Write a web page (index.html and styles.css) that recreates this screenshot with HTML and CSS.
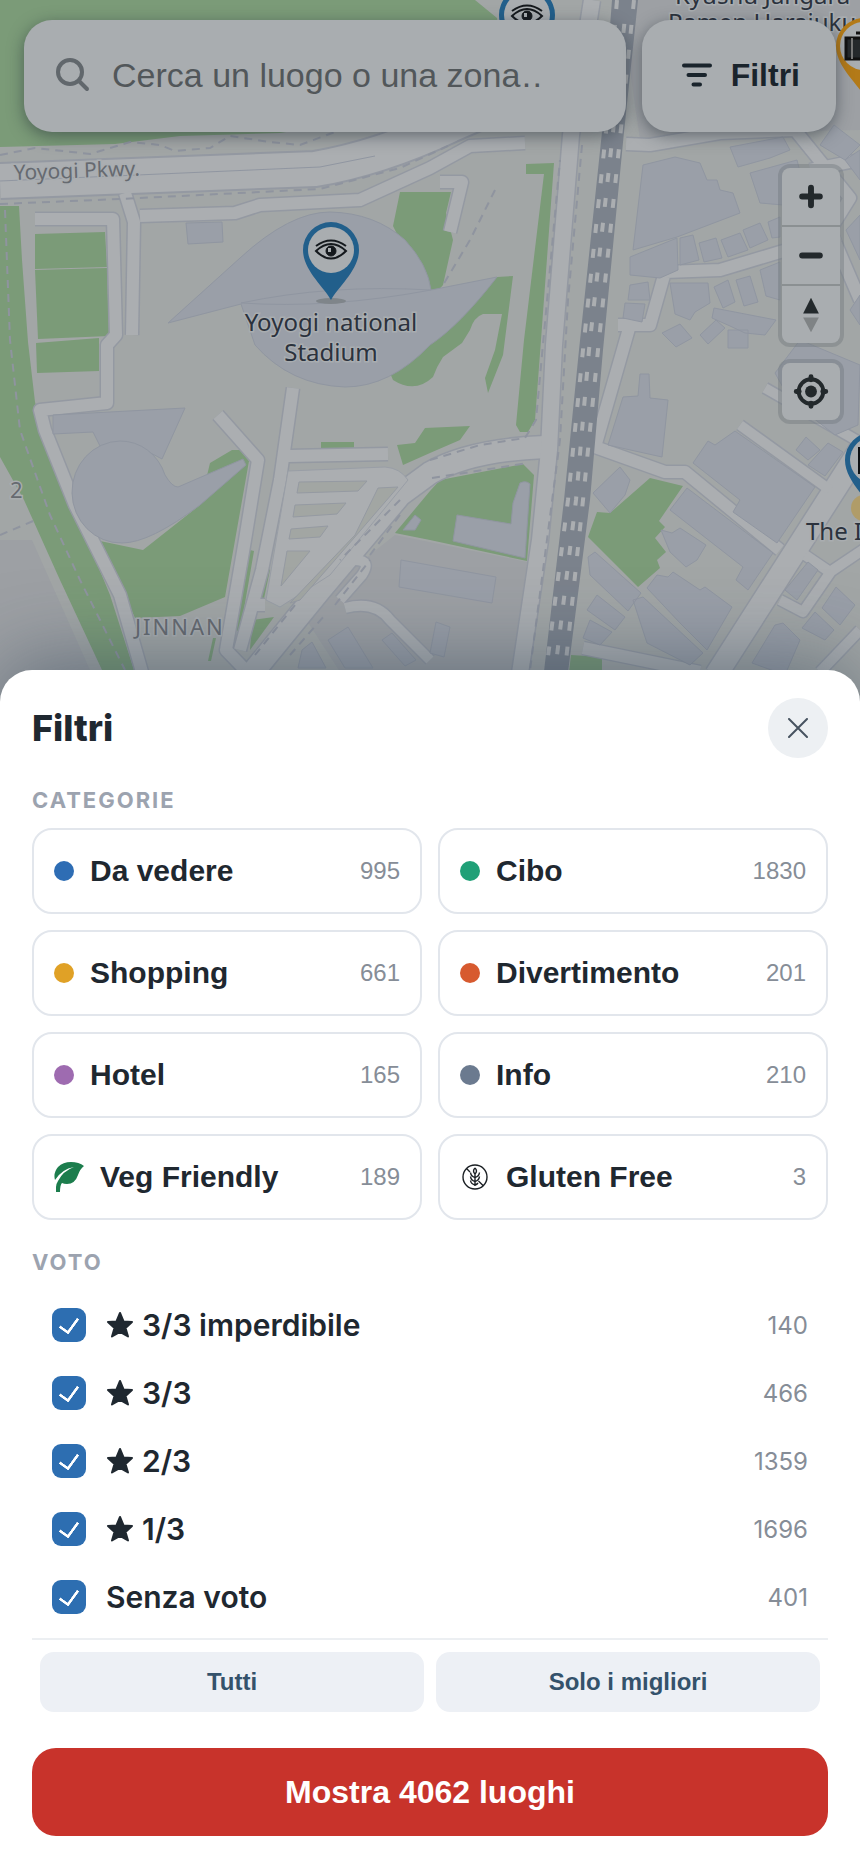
FILE: index.html
```html
<!DOCTYPE html>
<html lang="it">
<head>
<meta charset="utf-8">
<meta name="viewport" content="width=device-width, initial-scale=1">
<title>Filtri</title>
<link rel="stylesheet" href="styles.css">
</head>
<body>
<div class="app">
  <section class="stage">
    <svg class="map" viewBox="0 0 860 720" preserveAspectRatio="xMidYMin slice" role="img" aria-label="Mappa di Jinnan">
      <defs>
        <g id="eye" fill="none" stroke="#15191d">
          <path d="M-15 1Q0-13 15 1Q0 16-15 1Z" stroke-width="2"/>
          <path d="M-15-4Q0-15 15-4" stroke-width="2"/>
          <circle r="5" cy="1" fill="#15191d"/><rect x="-3" y="-2" width="3" height="4" fill="#a9adb0" stroke="none"/>
        </g>
        <path id="pin" d="M0 50C-7 37-28 20-28 0A28 28 0 0 1 28 0C28 20 7 37 0 50Z"/>
      </defs>
      <rect class="land" width="860" height="720"/>
      <path class="block" d="M0 540H32L90 670V720H0ZM620 0H860V130L720 133L640 140ZM395 535L527 562L512 672H340L300 610Z"/>
      <g class="green">
        <path d="M0 0H475L497 18L500 40L420 110L280 133L180 136L115 144L0 147Z"/>
        <path d="M0 206H19L22 260L28 342L35 402L45 440L75 510L110 595L134 670H102L60 580L24 500L0 457Z"/>
        <path d="M35 234L105 232L107 267L35 269ZM35 270L107 268L109 336L38 339ZM36 343L99 338V371L37 373Z"/>
        <path d="M400 192H451L446 213L453 240L443 285L430 300L393 226Z"/>
        <path d="M526 164L554 163L552 190L541 340L535 420L528 432H520L516 425L524 340L544 174H526Z"/>
        <path d="M497 277L513 276L503 355L488 393L485 378L495 350L502 314L483 314Q474 317 470 330L462 343L443 357Q437 366 433 377Q415 394 393 380L390 373L440 330Z"/>
        <path d="M397 445L415 443L425 428L470 426L460 440L430 453L403 465Z"/>
        <path d="M100 541L143 550L200 505L210 463L232 450H240L249 461L225 597L180 616L135 618Z"/>
        <path d="M395 533L430 491L440 480L523 464L534 475L527 561L430 540Z"/>
        <path d="M650 478L683 486L659 521L665 527L655 538L666 552L657 560L660 568L638 587L588 537L597 512L610 513Z"/>
        <path d="M571 655L602 657V672H569ZM321 442H354V449H321ZM266 566L270 570L262 608H257ZM252 620L274 617L250 650ZM250 550L236 630L240 632L254 551ZM213 638L208 661H211L216 638Z"/>
      </g>
      <g class="casing road">
        <path class="w36" d="M0 181L315 169Q380 158 450 125L600 60"/>
        <path class="w14" d="M125 193L134 222L132 335M35 219H113L116 335L107 345V403L40 410L45 430L75 505L120 595L142 672M140 216L235 213L260 205L360 200L430 168L470 146L525 143"/>
        <path class="w14" d="M218 415L258 460L245 540L226 650L255 680M293 388L280 480L262 570L240 650M288 456L388 454M265 605H255"/>
        <path class="w14" d="M440 182H462L450 232M626 144L650 145L720 133L795 130L850 198L830 230L860 300M630 325L595 447L665 472H685L780 550M618 325H650L665 272L720 270L780 252L840 235M583 648L700 672M810 170L860 160"/>
        <path class="w22" d="M245 682L320 590L400 495L430 473Q470 450 545 447M716 675L860 450"/>
        <path class="w12" d="M345 608Q375 600 390 620L430 660M355 560Q372 560 362 575L340 600M740 425L830 490M765 388L870 448M805 555L830 572L870 545M780 600L803 612L832 570M820 672L860 630"/>
        <path class="w16" d="M592 0L571 135L554 345L549 450L540 540L519 680"/>
      </g>
      <g class="road">
        <path class="w36" d="M0 181L315 169Q380 158 450 125L600 60"/>
        <path class="w14" d="M125 193L134 222L132 335M35 219H113L116 335L107 345V403L40 410L45 430L75 505L120 595L142 672M140 216L235 213L260 205L360 200L430 168L470 146L525 143"/>
        <path class="w14" d="M218 415L258 460L245 540L226 650L255 680M293 388L280 480L262 570L240 650M288 456L388 454M265 605H255"/>
        <path class="w14" d="M440 182H462L450 232M626 144L650 145L720 133L795 130L850 198L830 230L860 300M630 325L595 447L665 472H685L780 550M618 325H650L665 272L720 270L780 252L840 235M583 648L700 672M810 170L860 160"/>
        <path class="w22" d="M245 682L320 590L400 495L430 473Q470 450 545 447M716 675L860 450"/>
        <path class="w12" d="M345 608Q375 600 390 620L430 660M355 560Q372 560 362 575L340 600M740 425L830 490M765 388L870 448M805 555L830 572L870 545M780 600L803 612L832 570M820 672L860 630"/>
        <path class="w16" d="M592 0L571 135L554 345L549 450L540 540L519 680"/>
      </g>
      <path class="lot" d="M288 471L385 467Q400 468 408 480L330 575L280 607L266 600Z"/>
      <path class="island" d="M299 482L367 481L358 491L297 493ZM295 505L346 503L337 514L293 517ZM291 529L328 526L320 537L289 539ZM287 551H310L281 586ZM378 488L398 487L335 560L300 600L290 603L355 535Z"/>
      <g class="building">
        <path d="M168 323L240 258Q290 212 330 212Q375 213 405 240Q428 265 431 290L497 277Q460 325 430 345Q390 387 345 387Q290 385 255 345L241 304Z"/>
        <path d="M186 223L222 222L223 242L188 244ZM53 415L185 408L162 459L145 450L100 446L93 432L53 434Z"/>
        <path d="M120 441A47 50 0 0 1 165 475Q172 487 178 487L243 459L246 465L200 505Q150 543 122 543A49 51 0 0 1 120 441Z"/>
        <path d="M520 483Q526 480 530 484L525 558L453 541L457 515L511 524L513 503Z"/>
        <path d="M401 560L496 577L492 603L399 587ZM403 530L415 515L421 520L415 530ZM436 622L450 627L444 657L430 653ZM328 640L348 627L373 668H345ZM382 640L392 633L416 660L405 666ZM302 650L312 642L326 668H298Z"/>
        <path d="M643 165L675 157L700 163L707 180L717 180L720 190L733 193L740 213L677 237L633 250Z"/>
        <path d="M730 147L783 137L790 150L770 158L738 167ZM750 173L797 160L806 195L790 198L783 205L760 203ZM820 145L834 125L860 145L845 160Z"/>
        <path d="M630 257L677 238L678 270L660 278L630 275ZM680 238L693 235L699 260L680 265ZM699 243L716 238L722 258L704 262ZM721 240L740 233L748 250L728 257ZM743 230L760 223L768 240L750 248ZM768 222L780 217V237L772 238Z"/>
        <path d="M630 285L648 282L650 300L628 300ZM625 303L645 304L642 322L623 318ZM670 283L708 283L710 303L695 312L690 320L675 314ZM714 287L728 280L735 302L723 308ZM736 280L750 276L758 302L744 306ZM760 270L780 262V300L766 296ZM714 308L776 320L765 335L745 333L730 326L712 318ZM662 333L680 324L692 338L676 347ZM700 335L716 320L725 328L708 344ZM728 330H748V348H728Z"/>
        <path d="M623 397L638 396L640 374H649L650 398L668 400L662 457L608 445ZM593 493L620 467L630 480L625 495L610 513Z"/>
        <path d="M693 463L708 441L715 445L735 431L815 487L777 543L733 512L740 500ZM670 510L687 488L773 553L748 590L736 580L743 567Z"/>
        <path d="M661 530L672 533L680 528L706 545L697 560L686 567L670 552ZM647 588L657 575L668 577L673 572L700 590L705 587L732 607L707 650L680 623ZM588 557L595 552L641 593L628 611L590 575ZM633 600L643 597L703 653L690 665L647 643ZM597 595L625 617L615 630L587 610ZM590 620L612 632L600 645L583 638Z"/>
        <path d="M752 663L775 625L783 623L800 640L785 675ZM802 628L815 612L834 630L825 640ZM822 608L836 587L855 605L840 625ZM785 590L808 562L818 570L797 600ZM796 450L806 437L820 450L808 460ZM808 465L828 443L843 452L825 476ZM775 373L800 340L860 365L858 425L835 435L790 400ZM845 160L860 150V180ZM846 230L860 215V260ZM850 310L860 295V325Z"/>
      </g>
      <g class="thin">
        <path d="M241 303Q330 284 431 290Q330 309 241 303M0 181L320 167L375 156"/>
      </g>
      <g class="dashes">
        <path d="M0 155L35 148L90 154L130 142L160 145L175 151L210 148L230 136L270 142L300 145L335 132M0 204L120 199L320 189L400 168L450 145"/>
        <path d="M5 210L10 340L20 430L50 515L80 580L125 670M0 535L38 519M495 190L470 240L443 285M430 460L480 445L525 438L536 420L560 160M432 478L528 463M400 500L340 560M400 515L370 555M335 605L370 560M255 655L295 605M290 655L325 615M582 145L568 300L560 440L530 670"/>
      </g>
      <path class="rail" d="M612 0H638L624 132L603 350L590 500L567 680H543L564 500L579 350L602 132Z"/>
      <g class="track">
        <path d="M617 0L606 132L583 350L568 500L545 680"/>
        <path d="M626 8L613 132L589 350L576 500L554 680"/>
        <path d="M634 0L620 138L598 350L583 500L564 680"/>
      </g>
      <g class="label">
        <text x="675" y="4">Kyushu Jangara</text>
        <text x="668" y="31">Ramen Harajuku</text>
        <text x="331" y="331" text-anchor="middle">Yoyogi national</text>
        <text x="331" y="361" text-anchor="middle">Stadium</text>
        <text x="806" y="540">The Iceberg</text>
      </g>
      <g class="label area">
        <text class="street" x="14" y="180" transform="rotate(-2 14 180)">Yoyogi Pkwy.</text>
        <text x="10" y="498">2</text>
        <text class="district" x="135" y="635">JINNAN</text>
      </g>
      <ellipse cx="331" cy="301" rx="15" ry="3" fill="#7f858a"/>
      <g transform="translate(331 250)"><use href="#pin" fill="#225f8b"/><circle r="23" fill="#a9adb0"/><use href="#eye"/></g>
      <g transform="translate(527 15)"><use href="#pin" fill="#225f8b"/><circle r="23" fill="#a9adb0"/><use href="#eye"/></g>
      <g transform="translate(864 46)"><use href="#pin" fill="#b37a18"/><circle r="24" fill="#a9adb0"/><path d="M-18-8H18V13H-18ZM-8-13H8V-8" fill="#25292c" stroke="#111" stroke-width="3"/><path d="M-12-8V13" stroke="#777" stroke-width="2"/></g>
      <circle cx="864" cy="508" r="13" fill="#b09c68"/>
      <g transform="translate(873 460)"><use href="#pin" fill="#225f8b"/><circle r="23" fill="#a9adb0"/><rect x="-15" y="-13" width="28" height="27" fill="#0c0f12"/><path d="M-12-9V12" stroke="#777" stroke-width="1" stroke-dasharray="2 3"/></g>
    </svg>

    <div class="topbar">
      <label class="search">
        <svg viewBox="0 0 34 34" width="34" height="34" aria-hidden="true"><circle cx="14" cy="14" r="12" /><path d="M23 23L31 31"/></svg>
        <input class="search-input" type="text" aria-label="Cerca" placeholder="Cerca un luogo o una zona…">
      </label>
      <button class="filter-button" type="button">
        <svg viewBox="0 0 30 24" width="30" height="24" aria-hidden="true"><path d="M2 2.500H28M6.500 12H23M11.500 21.500H18"/></svg>
        Filtri
      </button>
    </div>

    <div class="controls">
      <div class="control-group">
        <button type="button" aria-label="Ingrandisci"><svg viewBox="0 0 58 58"><path class="bar" d="M29 20V38M20 29H38"/></svg></button>
        <button type="button" aria-label="Riduci"><svg viewBox="0 0 58 58"><path class="bar" d="M20 29H38"/></svg></button>
        <button type="button" aria-label="Orienta a nord"><svg viewBox="0 0 58 58"><path fill="#23292c" d="M21 28L29 12L37 28Z"/><path fill="#7f8385" d="M21 32H37L29 47Z"/></svg></button>
      </div>
      <div class="control-group">
        <button type="button" aria-label="La mia posizione"><svg viewBox="0 0 58 58"><circle cx="29" cy="29" r="12.500" fill="none" stroke="#23292c" stroke-width="4"/><circle cx="29" cy="29" r="6" fill="#23292c"/><path d="M29 14V17M29 41V44M14 29H17M41 29H44" stroke="#23292c" stroke-width="5" stroke-linecap="round"/></svg></button>
      </div>
    </div>
  </section>

  <main class="sheet">
    <header class="sheet-header">
      <h1>Filtri</h1>
      <button class="close" type="button" aria-label="Chiudi"><svg viewBox="0 0 20 20" width="20" height="20"><path d="M1 1L19 19M19 1L1 19"/></svg></button>
    </header>

    <h2>Categorie</h2>
    <div class="categories">
      <button class="category" type="button"><span class="dot blue"></span><span class="name">Da vedere</span><span class="count">995</span></button>
      <button class="category" type="button"><span class="dot teal"></span><span class="name">Cibo</span><span class="count">1830</span></button>
      <button class="category" type="button"><span class="dot amber"></span><span class="name">Shopping</span><span class="count">661</span></button>
      <button class="category" type="button"><span class="dot orange"></span><span class="name">Divertimento</span><span class="count">201</span></button>
      <button class="category" type="button"><span class="dot purple"></span><span class="name">Hotel</span><span class="count">165</span></button>
      <button class="category" type="button"><span class="dot slate"></span><span class="name">Info</span><span class="count">210</span></button>
      <button class="category" type="button">
        <svg viewBox="0 0 30 30" width="30" height="30" aria-hidden="true"><path fill="#1c7d4d" d="M2 30V25Q2 22 4 19Q9 9 20 5Q8 7 1 18Q-1 11 4 5Q9 0 17 0Q25 0 30 4Q26 7 24 13Q21 22 13 22Q10 22 8 21Q6 23 6 30Z"/></svg>
        <span class="name">Veg Friendly</span><span class="count">189</span>
      </button>
      <button class="category" type="button">
        <svg viewBox="0 0 30 30" width="30" height="30" aria-hidden="true" fill="none" stroke="#1b2024" stroke-width="1.400">
          <circle cx="15" cy="15" r="12"/>
          <path d="M6.500 6.500L10 10M18.500 19L23.500 24M15 12V24M15 6Q12 9 15 12Q18 9 15 6M10.500 10.500Q11 14.500 15 15.500Q19 14.500 19.500 10.500M10.500 14.500Q11 18.500 15 19.500Q19 18.500 19.500 14.500M10.500 18.500Q11 22 15 23Q17 22.500 18 21"/>
        </svg>
        <span class="name">Gluten Free</span><span class="count">3</span>
      </button>
    </div>

    <h2>Voto</h2>
    <div class="votes">
      <label class="vote"><input type="checkbox" checked><span class="name"><svg class="star" viewBox="0 0 28 28"><path d="M14 2L17.500 10.500L26 11L19.500 17L22 25.500L14 21L6 25.500L8.500 17L2 11L10.500 10.500Z"/></svg>3/3 imperdibile</span><span class="count">140</span></label>
      <label class="vote"><input type="checkbox" checked><span class="name"><svg class="star" viewBox="0 0 28 28"><path d="M14 2L17.500 10.500L26 11L19.500 17L22 25.500L14 21L6 25.500L8.500 17L2 11L10.500 10.500Z"/></svg>3/3</span><span class="count">466</span></label>
      <label class="vote"><input type="checkbox" checked><span class="name"><svg class="star" viewBox="0 0 28 28"><path d="M14 2L17.500 10.500L26 11L19.500 17L22 25.500L14 21L6 25.500L8.500 17L2 11L10.500 10.500Z"/></svg>2/3</span><span class="count">1359</span></label>
      <label class="vote"><input type="checkbox" checked><span class="name"><svg class="star" viewBox="0 0 28 28"><path d="M14 2L17.500 10.500L26 11L19.500 17L22 25.500L14 21L6 25.500L8.500 17L2 11L10.500 10.500Z"/></svg>1/3</span><span class="count">1696</span></label>
      <label class="vote"><input type="checkbox" checked><span class="name">Senza voto</span><span class="count">401</span></label>
    </div>

    <div class="presets">
      <button type="button">Tutti</button>
      <button type="button">Solo i migliori</button>
    </div>
    <button class="submit" type="button">Mostra 4062 luoghi</button>
  </main>
</div>
</body>
</html>
```
FILE: styles.css
```css
* { box-sizing: border-box; }
body { margin: 0; color: #1f2830; font-family: Inter, sans-serif; background: #a2a5a5; }
button, input { font-family: "Liberation Sans", Arial, sans-serif; color: inherit; }
button { border: 0; padding: 0; cursor: pointer; }
h1, h2 { margin: 0; }

.app { display: flex; flex-direction: column; min-height: 100vh; }

/* Map */
.stage { position: relative; flex: 1; min-height: 480px; padding: 20px 24px 72px; }
.map { position: absolute; inset: 0; width: 100%; height: 100%; }
.land { fill: #a2a6a6; }
.block { fill: #9da0a4; }
.green { fill: #7b9b78; }
.road path { fill: none; stroke: #abaeb1; stroke-linejoin: round; }
.casing path { stroke: #9499a2; }
.road .w12 { stroke-width: 10; }
.road .w14 { stroke-width: 12; }
.road .w16 { stroke-width: 16; }
.road .w22 { stroke-width: 22; }
.road .w36 { stroke-width: 34; }
.casing .w12 { stroke-width: 13; }
.casing .w14 { stroke-width: 15; }
.casing .w16 { stroke-width: 19; }
.casing .w22 { stroke-width: 25; }
.casing .w36 { stroke-width: 38; }
.lot { fill: #abaeb1; stroke: #999ea6; }
.island { fill: #a2a6a3; stroke: #959aa2; }
.building { fill: #9a9fa8; stroke: #9096a1; stroke-width: 1; }
.thin { fill: none; stroke: #9096a1; }
.dashes { fill: none; stroke: #8f949f; stroke-width: 2; stroke-dasharray: 8 6; }
.rail { fill: #7b828c; }
.track { fill: none; stroke: #abaeb1; stroke-width: 4; stroke-dasharray: 9 16; }
.track path:nth-child(2) { stroke-dashoffset: 9; }
.label { font: 24px "Noto Sans", sans-serif; fill: #2b323d; stroke: #a9adb0; stroke-width: 3px; paint-order: stroke; }
.area { font-size: 22px; fill: #666a70; }
.street { font-size: 21px; }
.district { letter-spacing: 2px; }

.topbar { position: relative; display: grid; grid-template-columns: minmax(0, 1fr) auto; gap: 16px; }
.search, .filter-button { display: flex; align-items: center; height: 112px; border-radius: 28px; background: #a9adb0; box-shadow: 0 4px 16px rgba(30, 40, 50, .5); }
.search { gap: 22px; padding: 0 82px 2px 32px; }
.search svg { flex: none; fill: none; stroke: #61676c; stroke-width: 4; stroke-linecap: round; }
.search-input { flex: 1; min-width: 0; padding: 0; border: 0; outline: 0; background: none; font-size: 34px; }
.search-input::placeholder { color: #52575a; opacity: 1; }
.filter-button { gap: 19px; padding: 0 36px 2px 40px; font-size: 32px; font-weight: 700; color: #1a242c; }
.filter-button svg { fill: none; stroke: #1a242c; stroke-width: 4; stroke-linecap: round; }

.controls { position: relative; display: flex; flex-direction: column; align-items: flex-end; gap: 20px; margin: 36px -4px 0 0; }
.control-group { display: grid; gap: 2px; width: 58px; overflow: hidden; border-radius: 8px; background: #8b9092; box-shadow: 0 0 0 4px rgba(110, 117, 122, .4); }
.control-group button { height: 57px; background: #a9adb0; }
.control-group svg { display: block; width: 58px; height: 57px; }
.bar { stroke: #23292c; stroke-width: 6; stroke-linecap: round; }

/* Bottom sheet */
.sheet { position: relative; margin-top: -48px; padding: 28px 32px; border-radius: 32px 32px 0 0; background: #fff; box-shadow: 0 -8px 80px rgba(40, 60, 80, .5); }
.sheet-header { display: flex; align-items: center; justify-content: space-between; height: 60px; }
h1 { font-size: 36px; line-height: 44px; font-weight: 800; }
.close { display: grid; place-items: center; width: 60px; height: 60px; border-radius: 50%; background: #edf0f3; }
.close svg { fill: none; stroke: #475360; stroke-width: 2; stroke-linecap: round; }
h2 { margin-top: 28px; font-size: 22px; line-height: 28px; font-weight: 700; letter-spacing: 2px; text-transform: uppercase; color: #9ca3af; }

.categories { display: grid; grid-template-columns: 1fr 1fr; gap: 16px; margin-top: 14px; }
.category { display: flex; align-items: center; gap: 16px; height: 86px; padding: 0 20px; border: 2px solid #e2e6ec; border-radius: 20px; background: #fff; text-align: left; }
.name { flex: 1; font-size: 30px; }
.category .name { font-weight: 700; }
.count { font-size: 24px; color: #868d97; }
.dot { width: 20px; height: 20px; border-radius: 50%; }
.blue { background: #2e6db4; }
.teal { background: #20a077; }
.amber { background: #e0a126; }
.orange { background: #d75a2f; }
.purple { background: #9e6bb0; }
.slate { background: #6b7a8f; }

.votes { margin-top: 15px; padding-bottom: 7px; border-bottom: 2px solid #eceff2; }
.vote { display: flex; align-items: center; gap: 20px; height: 68px; padding: 0 20px; }
.vote .name { display: flex; align-items: center; gap: 8px; font-weight: 600; }
.vote input { appearance: none; display: grid; place-items: center; width: 34px; height: 34px; margin: 0; border-radius: 9px; background: #2d6eb1; }
.vote input::after { content: ""; width: 9px; height: 16px; margin-bottom: 3px; border: solid #fff; border-width: 0 3px 3px 0; border-radius: 1px; transform: rotate(36deg); }
.star { width: 28px; height: 28px; fill: #1f2830; stroke: #1f2830; stroke-width: 2; stroke-linejoin: round; }

.presets { display: grid; grid-template-columns: 1fr 1fr; gap: 12px; padding: 12px 8px 0; }
.presets button { height: 60px; border-radius: 14px; background: #edf0f5; color: #34526b; font-size: 24px; font-weight: 700; }
.submit { display: block; width: 100%; height: 88px; margin-top: 36px; border-radius: 24px; background: #c8332b; color: #fff; font-size: 32px; font-weight: 700; }
```
